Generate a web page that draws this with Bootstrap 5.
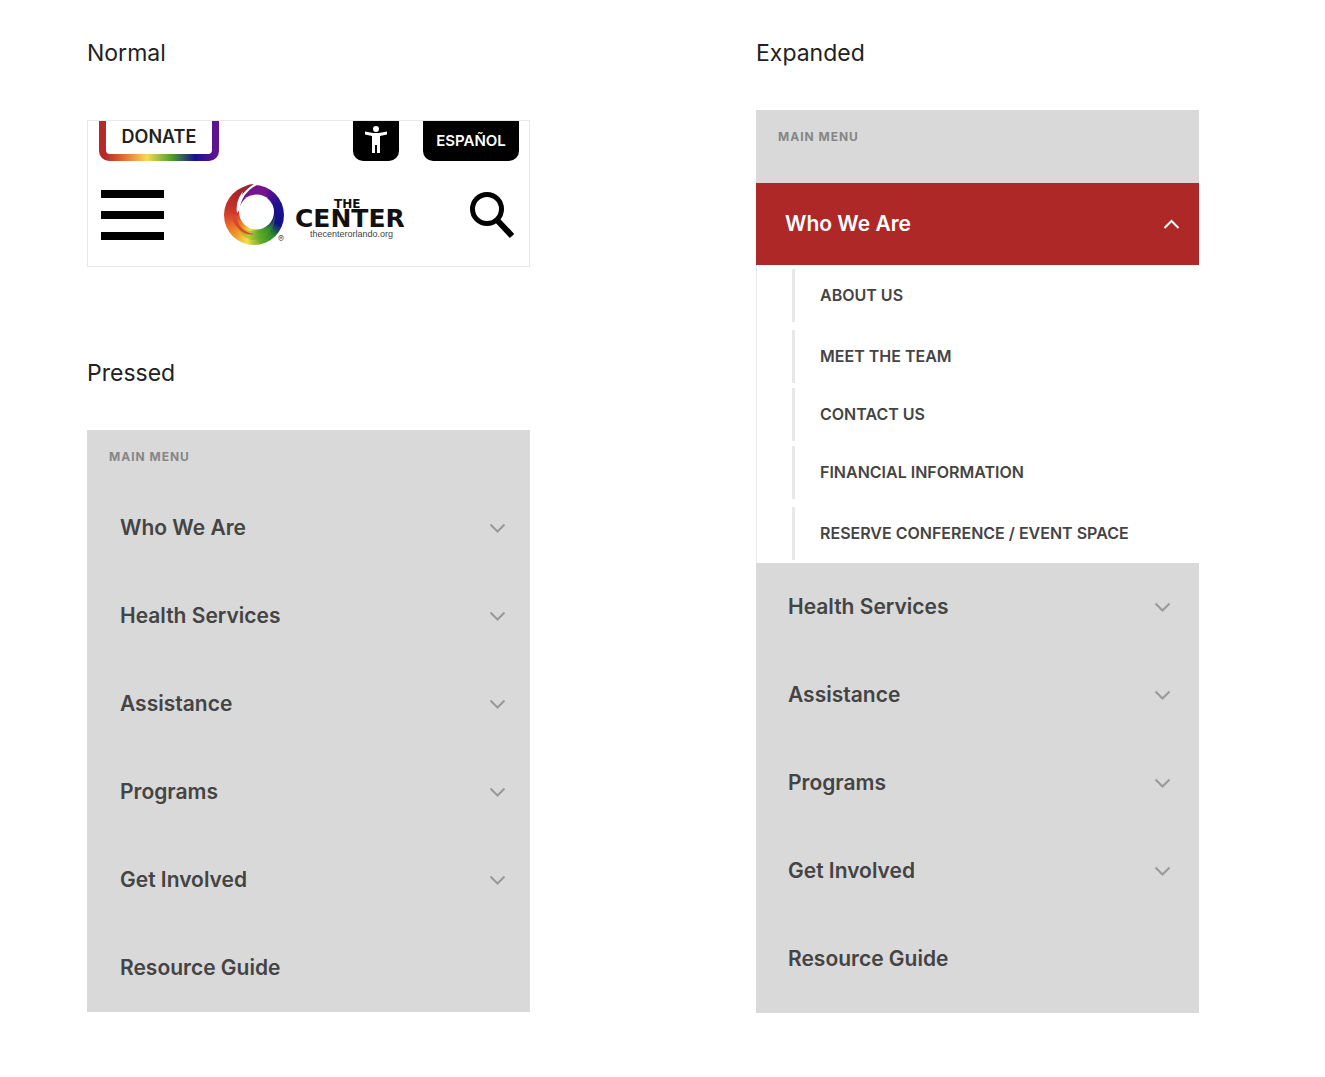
<!DOCTYPE html>
<html lang="en">
<head>
<meta charset="utf-8">
<meta name="viewport" content="width=device-width, initial-scale=1">
<title>Mobile menu states</title>
<link href="https://cdn.jsdelivr.net/npm/bootstrap@5.3.0/dist/css/bootstrap.min.css" rel="stylesheet">
<style>
  body { font-family: Inter, "Open Sans", sans-serif; background: #fff; color: #222; }
  .board { padding: 37px 126px 64px 87px; gap: 226px; }
  .state { flex: 1 1 0; min-width: 0; }
  .state-title { font-size: 23px; line-height: 32px; font-weight: 400; margin: 0 0 41px; }
  .state-title.roomy { margin-bottom: 51px; }
  .site-head { border: 1px solid #e8e8e8; padding: 0 10px 17px 11px; margin-bottom: 90px; }
  .tab-btn { border: 0; height: 40px; border-radius: 0 0 10px 10px; background: #000; color: #fff; font-size: 15px; line-height: 20px; font-weight: 600; padding: 0; }
  .tab-donate { width: 120px; padding: 0 7px 7px; font-size: 18px; background: linear-gradient(90deg, #b5292b 5%, #dd6b35 20%, #f6d95a 40%, #4fa32f 60%, #17128c 80%, #5b138f 95%); }
  .tab-donate span { display: block; height: 33px; line-height: 31px; background: #fff; color: #222; border-radius: 0 0 4px 4px; }
  .tab-access { width: 46px; }
  .tab-lang { width: 96px; }
  .head-main { padding: 20px 5px 0 2px; }
  .icon-btn { border: 0; background: none; padding: 0; line-height: 0; color: #000; }
  .brand { text-decoration: none; color: #111; }
  .ring { width: 60px; height: 60px; border-radius: 50%; background: conic-gradient(from 0deg at 50% 50%, #7d1596 0deg, #5a1090 35deg, #1d118f 65deg, #10108a 110deg, #2c8b2c 138deg, #62ac26 165deg, #f3df45 195deg, #f19a2c 222deg, #e8642a 250deg, #cf3a2b 275deg, #b0282b 315deg, #8c2630 348deg, #7d1596 360deg); }
  .ring svg { overflow: visible; display: block; }
  .reg-mark { font-size: 9px; line-height: 12px; color: #555; width: 8px; margin-left: -6px; }
  .menu-panel { background: #d9d9d9; }
  .menu-label { font-size: 12px; line-height: 54px; font-weight: 700; letter-spacing: 1px; color: #868686; padding-left: 22px; margin: 0; }
  .menu-label.spaced { padding-bottom: 19px; }
  .menu-row { width: 100%; height: 88px; border: 0; background: none; color: #444; font-size: 21px; line-height: 28px; font-weight: 600; padding: 0 24px 0 33px; text-align: left; text-decoration: none; }
  .expanded { padding-bottom: 10px; }
  .expanded .menu-row { padding-right: 28px; padding-left: 32px; }
  .expanded .menu-row.current { height: 82px; background: #ad2826; color: #fff; padding-left: 29px; padding-right: 19px; }
  .chev { color: #999; }
  .current .chev { color: #fff; }
  .submenu { background: #fff; border-left: 1px solid #e8e8e8; padding: 4px 0 3px 35px; }
  .submenu li { border-left: 3px solid #e8e8e8; margin-bottom: 5px; }
  .submenu li.apart { margin-bottom: 8px; }
  .submenu li:last-child { margin-bottom: 0; }
  .submenu a { display: block; padding-left: 25px; font-size: 16px; line-height: 53px; font-weight: 600; color: #444; text-decoration: none; white-space: nowrap; }
</style>
</head>
<body>
<svg class="d-none" aria-hidden="true">
  <symbol id="down" viewBox="0 0 17 11"><path d="M1.5 1.5 8.5 8.500 15.500 1.500" fill="none" stroke="currentColor" stroke-width="2"/></symbol>
  <symbol id="up" viewBox="0 0 17 11"><path d="M1.500 9 8.500 2 15.500 9" fill="none" stroke="currentColor" stroke-width="2"/></symbol>
</svg>
<main class="board d-flex align-items-start">
  <div class="state">
    <section>
      <h2 class="state-title roomy">Normal</h2>
      <header class="site-head">
        <div class="d-flex align-items-start">
          <button type="button" class="tab-btn tab-donate me-auto"><span>DONATE</span></button>
          <button type="button" class="tab-btn tab-access" aria-label="Accessibility">
            <svg class="d-block mx-auto" width="24" height="36" viewBox="0 0 24 36" fill="#fff"><circle cx="12" cy="6" r="3"/><path d="M1 8.500 9 10h6l8-1.500v3L16 13v17h-3v-8h-2v8H8V13L1 11.500z"/></svg>
          </button>
          <button type="button" class="tab-btn tab-lang ms-4">ESPAÑOL</button>
        </div>
        <div class="head-main d-flex align-items-center justify-content-between">
          <button type="button" class="icon-btn" aria-label="Open menu">
            <svg width="63" height="50" viewBox="0 0 63 50"><path d="M0 0h63v8H0zM0 21h63v8H0zM0 42h63v8H0z"/></svg>
          </button>
          <a href="#" class="brand d-flex" aria-label="The Center home">
            <span class="ring mt-1">
              <svg width="60" height="60" viewBox="0 0 60 60">
                <path d="M14 24C15 12 22 4 31 0L42 3 44 14 32 9Z" fill="#74148f"/>
                <path d="M12 34C16 44 24 47 33 46C42 45 48 39 51 30C52 44 42 55 28 55C20 54 14 46 12 34Z" fill="#58a829" opacity=".35"/>
                <path d="M12 30C13 40 20 48 30 49C22 52 10 43 8 32Z" fill="#d9482b"/>
                <circle cx="32.500" cy="27" r="17.500" fill="#fff"/>
                <path d="M13 28C11 15 18 5 29-2L33 0C23 5 17 13 15.500 25Z" fill="#fff"/>
                <path d="M20 2C23 0 26-1 30-1C25 2 21 6 18 10Z" fill="#962a32"/>
              </svg>
            </span>
            <span class="reg-mark align-self-end mb-1">®</span>
            <svg width="124" height="68" viewBox="0 0 124 68" fill="#111" font-weight="700" font-family="DejaVu Sans, sans-serif">
              <text x="48" y="27" font-size="12">THE</text>
              <text x="9" y="46" font-size="25">CENTER</text>
              <text x="24" y="56" font-size="9" font-weight="400" font-family="Liberation Sans, sans-serif" fill="#444">thecenterorlando.org</text>
            </svg>
          </a>
          <button type="button" class="icon-btn" aria-label="Search">
            <svg width="44" height="48" viewBox="0 0 44 48" fill="none" stroke="#000"><circle cx="17" cy="18" r="14.500" stroke-width="5"/><path d="M27 29 42 45" stroke-width="6"/></svg>
          </button>
        </div>
      </header>
    </section>
    <section>
      <h2 class="state-title">Pressed</h2>
      <nav class="menu-panel" aria-label="Main menu">
        <p class="menu-label">MAIN MENU</p>
        <button type="button" class="menu-row d-flex align-items-center justify-content-between">Who We Are<svg class="chev" width="17" height="11"><use href="#down"/></svg></button>
        <button type="button" class="menu-row d-flex align-items-center justify-content-between">Health Services<svg class="chev" width="17" height="11"><use href="#down"/></svg></button>
        <button type="button" class="menu-row d-flex align-items-center justify-content-between">Assistance<svg class="chev" width="17" height="11"><use href="#down"/></svg></button>
        <button type="button" class="menu-row d-flex align-items-center justify-content-between">Programs<svg class="chev" width="17" height="11"><use href="#down"/></svg></button>
        <button type="button" class="menu-row d-flex align-items-center justify-content-between">Get Involved<svg class="chev" width="17" height="11"><use href="#down"/></svg></button>
        <a href="#" class="menu-row d-flex align-items-center">Resource Guide</a>
      </nav>
    </section>
  </div>
  <section class="state">
    <h2 class="state-title">Expanded</h2>
    <nav class="menu-panel expanded" aria-label="Main menu, expanded">
      <p class="menu-label spaced">MAIN MENU</p>
      <button type="button" class="menu-row current d-flex align-items-center justify-content-between" aria-expanded="true">Who We Are<svg class="chev" width="17" height="11"><use href="#up"/></svg></button>
      <ul class="submenu list-unstyled mb-0">
        <li class="apart"><a href="#">ABOUT US</a></li>
        <li><a href="#">MEET THE TEAM</a></li>
        <li><a href="#">CONTACT US</a></li>
        <li class="apart"><a href="#">FINANCIAL INFORMATION</a></li>
        <li><a href="#">RESERVE CONFERENCE / EVENT SPACE</a></li>
      </ul>
      <button type="button" class="menu-row d-flex align-items-center justify-content-between">Health Services<svg class="chev" width="17" height="11"><use href="#down"/></svg></button>
      <button type="button" class="menu-row d-flex align-items-center justify-content-between">Assistance<svg class="chev" width="17" height="11"><use href="#down"/></svg></button>
      <button type="button" class="menu-row d-flex align-items-center justify-content-between">Programs<svg class="chev" width="17" height="11"><use href="#down"/></svg></button>
      <button type="button" class="menu-row d-flex align-items-center justify-content-between">Get Involved<svg class="chev" width="17" height="11"><use href="#down"/></svg></button>
      <a href="#" class="menu-row d-flex align-items-center">Resource Guide</a>
    </nav>
  </section>
</main>
<script src="https://cdn.jsdelivr.net/npm/bootstrap@5.3.0/dist/js/bootstrap.bundle.min.js"></script>
</body>
</html>
